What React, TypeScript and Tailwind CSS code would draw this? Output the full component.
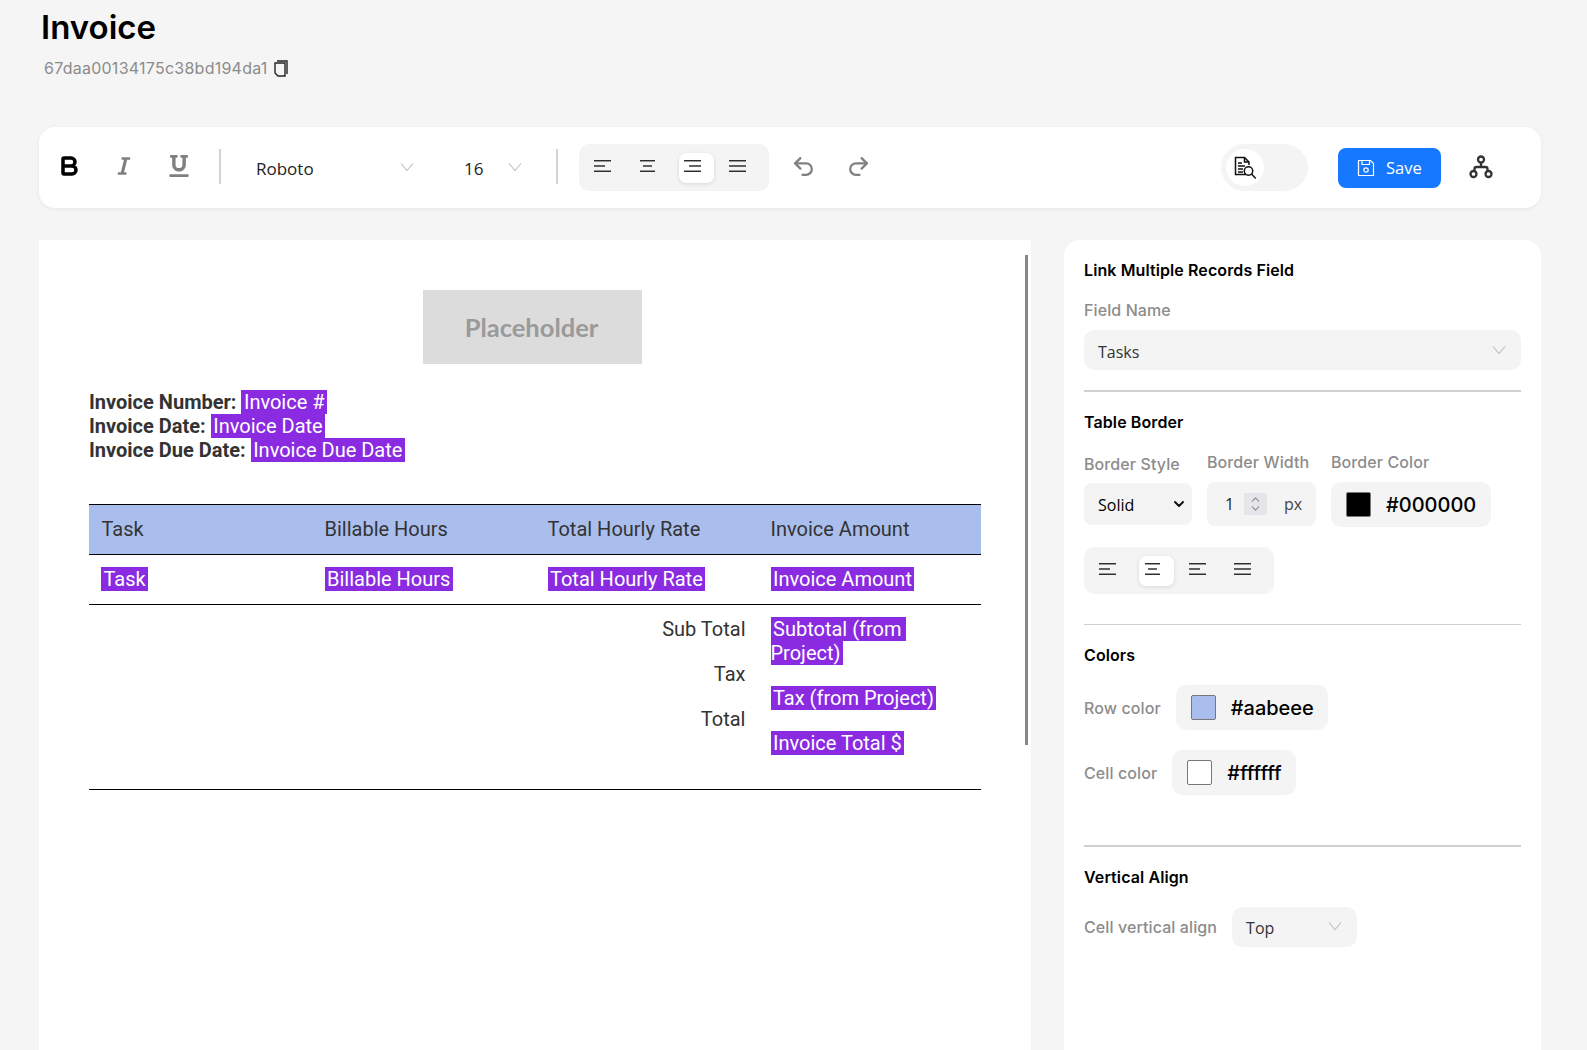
import { ChevronDown, ChevronUp, Undo2, Redo2, Bold } from 'lucide-react'
import { FaItalic, FaUnderline } from 'react-icons/fa'
import type { ReactNode } from 'react'

const inter = 'font-["Inter",sans-serif]'
const sans = 'font-["Open_Sans",sans-serif]'

function AlignIcon({ kind }: { kind: 'left' | 'center' | 'right' | 'justify' }) {
  const mid = {
    left: 'M0 6h11',
    center: 'M4 6h9',
    right: 'M5 6h12',
    justify: 'M0 6h17',
  }[kind]
  const top = kind === 'center' ? 'M1 .75h15' : 'M0 .75h17'
  const bottom = kind === 'center' ? 'M1 11.25h15' : 'M0 11.25h17'
  return (
    <svg width="17" height="12" viewBox="0 0 17 12" fill="none" stroke="#222" strokeWidth="1.4">
      <path d={top} />
      <path d={mid} />
      <path d={bottom} />
    </svg>
  )
}

function AlignGroup({ kinds, active }: { kinds: ('left' | 'center' | 'right' | 'justify')[]; active: number }) {
  return (
    <div className="flex h-[47px] w-[190px] items-center gap-[10px] rounded-[10px] bg-[#f4f4f4] px-[10px]">
      {kinds.map((kind, i) => (
        <div
          key={i}
          className={`flex h-[30px] w-[35px] items-center rounded-[7px] pb-[4px] pl-[5px] ${
            i === active ? 'bg-white shadow-[0_1px_4px_rgba(0,0,0,0.12)]' : ''
          }`}
        >
          <AlignIcon kind={kind} />
        </div>
      ))}
    </div>
  )
}

function Thin({ className = '' }: { className?: string }) {
  return (
    <svg width="14" height="8" viewBox="0 0 14 8" fill="none" stroke="#bdbdbd" strokeWidth="1.1" className={className}>
      <path d="M1 .5l6 7 6-7" />
    </svg>
  )
}

function Pill({ children }: { children: ReactNode }) {
  return <span className="bg-[#8a2be2] px-[2.5px] text-white [box-decoration-break:slice]">{children}</span>
}

function Heading({ children }: { children: ReactNode }) {
  return <div className={`${inter} text-base leading-5 font-semibold tracking-[0.1px] text-black`}>{children}</div>
}

function Label({ children, className = '' }: { children: ReactNode; className?: string }) {
  return (
    <div className={`${inter} text-base leading-5 font-medium tracking-[0.1px] whitespace-nowrap text-[#8c8c8c] ${className}`}>
      {children}
    </div>
  )
}

function ColorBox({ color, value, className = '' }: { color: string; value: string; className?: string }) {
  return (
    <div className={`flex h-[45px] items-center gap-[15px] rounded-[10px] bg-[#f4f4f4] pl-[15px] ${className}`}>
      <span className="h-[25px] w-[25px] rounded-[2px] border border-[#777]" style={{ backgroundColor: color }} />
      <span className={`${inter} text-xl font-medium text-black`}>{value}</span>
    </div>
  )
}

function DocSearchIcon() {
  return (
    <svg width="24" height="24" viewBox="0 0 24 24" fill="none" stroke="#111" strokeWidth="1.5">
      <path d="M13 18.5H2.5V1.5h9l4.5 4.5v3" />
      <path d="M11.5 1.5V6H16" />
      <path d="M5 7h4M5 10h7M5 13h5M5 16h5" />
      <circle cx="15.5" cy="15" r="4.2" />
      <path d="M18.5 18l4.3 4.5" />
    </svg>
  )
}

function SaveIcon() {
  return (
    <svg width="18" height="18" viewBox="0 0 18 18" fill="none" stroke="white" strokeWidth="1.2">
      <path d="M1.5 1.5h12l3 3v12h-15z" />
      <path d="M5 1.5v4h7.5v-4" />
      <circle cx="9" cy="11" r="2.2" />
    </svg>
  )
}

function NetworkIcon() {
  return (
    <svg width="24" height="24" viewBox="0 0 24 24" fill="none" stroke="#333" strokeWidth="2.3">
      <circle cx="12" cy="4.5" r="3" />
      <circle cx="4.5" cy="19" r="3" />
      <circle cx="19.5" cy="19" r="3" />
      <path d="M12 7.5v4.5M5.5 16v-2a2 2 0 012-2h9a2 2 0 012 2v2" />
    </svg>
  )
}

function CopyIcon() {
  return (
    <svg width="14" height="17" viewBox="0 0 14 17" fill="none" stroke="#222" strokeWidth="1.4">
      <path d="M3 1h10v13" />
      <path d="M1 3h10v13H4l-3-3z" />
    </svg>
  )
}

function Toolbar() {
  return (
    <div className="flex h-[81px] items-center rounded-2xl bg-white pl-[18px] shadow-[0_1px_4px_rgba(0,0,0,0.06)]">
      <Bold size={24} strokeWidth={3.5} className="-mt-[4px] text-black" />
      <FaItalic size={20} className="-mt-[3px] ml-[33px] text-[#808080]" />
      <FaUnderline size={22} className="-mt-[3px] ml-[34px] text-[#808080]" />
      <div className="-mt-[2px] ml-[29px] h-[35px] w-[2px] bg-[#d4d4d4]" />
      <span className={`${sans} ml-[35px] w-[144px] pt-[3px] text-[17px] text-[#222]`}>Roboto</span>
      <Thin className="-mt-[2px]" />
      <span className={`${sans} ml-[50px] w-[44px] pt-[3px] text-[17px] text-[#222]`}>16</span>
      <Thin className="-mt-[2px]" />
      <div className="-mt-[2px] ml-[34px] h-[35px] w-[2px] bg-[#d4d4d4]" />
      <div className="ml-[21px]">
        <AlignGroup kinds={['left', 'center', 'right', 'justify']} active={2} />
      </div>
      <Undo2 size={25} strokeWidth={2.2} className="-mt-[2px] ml-[22px] text-[#808080]" />
      <Redo2 size={25} strokeWidth={2.2} className="-mt-[2px] ml-[30px] text-[#808080]" />
      <div className="ml-[350px] flex h-[47px] w-[87px] items-center rounded-full bg-[#f4f4f4] pl-[5px]">
        <div className="flex h-[37px] w-[38px] items-center justify-center rounded-full bg-white">
          <DocSearchIcon />
        </div>
      </div>
      <div className="ml-[30px] flex h-10 w-[103px] items-center gap-[11px] rounded-lg bg-[#1677ff] pl-[19px]">
        <SaveIcon />
        <span className={`${sans} pt-[1px] text-[16.5px] text-white`}>Save</span>
      </div>
      <div className="-mt-[2px] ml-[28px]">
        <NetworkIcon />
      </div>
    </div>
  )
}

function InvoiceTable() {
  const columns = ['Task', 'Billable Hours', 'Total Hourly Rate', 'Invoice Amount']
  return (
    <table className="mt-[42px] w-full table-fixed border-collapse border-y border-black">
      <thead>
        <tr className="border-b border-black bg-[#aabeee]">
          {columns.map((name) => (
            <th key={name} className="px-[12.5px] pt-[12px] pb-[13px] text-left font-normal">
              {name}
            </th>
          ))}
        </tr>
      </thead>
      <tbody>
        <tr className="border-b border-black">
          {columns.map((name, i) => (
            <td key={name} className={`pt-[12px] pr-[12.5px] pb-[13px] ${i === 0 ? 'pl-3' : 'pl-[12.5px]'}`}>
              <Pill>{name}</Pill>
            </td>
          ))}
        </tr>
        <tr>
          <td className="px-3 py-[12.5px]" />
          <td className="px-3 py-[12.5px]" />
          <td className="px-[12.5px] pt-[12px] pb-[13px] align-top text-right">
            <p className="mb-[21px]">Sub Total</p>
            <p className="mb-[21px]">Tax</p>
            <p className="mb-[21px]">Total</p>
          </td>
          <td className="px-[12.5px] pt-[12px] pb-[13px] align-top">
            <p className="mb-[21px]">
              <Pill>{'Subtotal (from\u00a0 Project)'}</Pill>
            </p>
            <p className="mb-[21px]">
              <Pill>Tax (from Project)</Pill>
            </p>
            <p className="mb-[21px]">
              <Pill>Invoice Total $</Pill>
            </p>
          </td>
        </tr>
      </tbody>
    </table>
  )
}

function Canvas() {
  return (
    <div className='relative h-[900px] w-[992px] shrink-0 bg-white px-[50px] pt-[50px] font-["Roboto",sans-serif] text-xl leading-6 text-[#333]'>
      <div className="absolute top-[15px] right-[3px] h-[490px] w-[3px] bg-[#888]" />
      <div className='ml-[334px] flex h-[74px] w-[219px] items-center justify-center bg-[#dcdcdc] pr-[2px] pb-[1px] font-["Lato",sans-serif] text-[25.5px] font-bold text-[#9a9a9a]'>
        Placeholder
      </div>
      <div className="mt-[26px] font-bold">
        <div>
          Invoice Number: <span className="font-normal"><Pill>Invoice #</Pill></span>
        </div>
        <div>
          Invoice Date: <span className="font-normal"><Pill>Invoice Date</Pill></span>
        </div>
        <div>
          Invoice Due Date: <span className="font-normal"><Pill>Invoice Due Date</Pill></span>
        </div>
      </div>
      <InvoiceTable />
    </div>
  )
}

function SidePanel() {
  return (
    <div className="h-[900px] flex-1 rounded-t-2xl bg-white px-5 pt-5">
      <Heading>Link Multiple Records Field</Heading>
      <Label className="mt-[20px]">Field Name</Label>
      <div className="mt-[10px] flex h-10 items-center justify-between rounded-[10px] bg-[#f4f4f4] pr-[15px] pl-[14px]">
        <span className={`${sans} pt-[3px] text-base text-[#333]`}>Tasks</span>
        <Thin />
      </div>
      <div className="mt-[20px] h-[2px] bg-[#cfcfcf]" />

      <div className="mt-[20px]">
        <Heading>Table Border</Heading>
      </div>
      <div className="mt-[20px] flex">
        <div className="w-[123px]">
          <Label className="mt-[2px]">Border Style</Label>
          <div className="mt-[9px] flex h-[42px] w-[108px] items-center justify-between rounded-[8px] bg-[#f4f4f4] pr-[5px] pl-[14px]">
            <span className={`${sans} pt-[1px] text-base text-black`}>Solid</span>
            <ChevronDown size={16} strokeWidth={3} className="text-[#111]" />
          </div>
        </div>
        <div className="w-[124px]">
          <Label>Border Width</Label>
          <div className="mt-[10px] flex h-[44px] w-[109px] items-center rounded-[8px] bg-[#f4f4f4] pl-[18px]">
            <span className={`${sans} w-[19px] text-base text-[#222]`}>1</span>
            <div className="flex h-[22px] w-[23px] flex-col items-center justify-center bg-[#e6e6ea]">
              <ChevronUp size={13} strokeWidth={2} className="-mb-[2px] text-[#8e8e8e]" />
              <ChevronDown size={13} strokeWidth={2} className="-mt-[2px] text-[#8e8e8e]" />
            </div>
            <span className={`${sans} ml-[17px] text-base text-[#444]`}>px</span>
          </div>
        </div>
        <div>
          <Label>Border Color</Label>
          <ColorBox color="#000000" value="#000000" className="mt-[10px] w-[160px]" />
        </div>
      </div>
      <div className="mt-[20px]">
        <AlignGroup kinds={['left', 'center', 'left', 'justify']} active={1} />
      </div>
      <div className="mt-[30px] h-px bg-[#cfcfcf]" />

      <div className="mt-[20px]">
        <Heading>Colors</Heading>
      </div>
      <div className="mt-[20px] flex items-center gap-[15px]">
        <Label>Row color</Label>
        <ColorBox color="#aabeee" value="#aabeee" className="w-[152px]" />
      </div>
      <div className="mt-[20px] flex items-center gap-[15px]">
        <Label>Cell color</Label>
        <ColorBox color="#ffffff" value="#ffffff" className="w-[124px]" />
      </div>
      <div className="mt-[50px] h-[2px] bg-[#cfcfcf]" />

      <div className="mt-[20px]">
        <Heading>Vertical Align</Heading>
      </div>
      <div className="mt-[20px] flex items-center gap-[15px]">
        <Label>Cell vertical align</Label>
        <div className="flex h-10 w-[125px] items-center justify-between rounded-[10px] bg-[#f4f4f4] pr-[15px] pl-[14px]">
          <span className={`${sans} pt-[1px] text-base text-[#333]`}>Top</span>
          <Thin className="-mt-[2px]" />
        </div>
      </div>
    </div>
  )
}

export default function App() {
  return (
    <div className="h-[1050px] overflow-hidden bg-[#f5f5f5] pr-[46px] pl-[39px]">
      <div className="pt-[7px] pl-[2px]">
        <h1 className={`${inter} text-[33px] leading-10 font-semibold text-black`}>Invoice</h1>
        <div className={`${inter} mt-[9px] flex items-center gap-[6px] pl-[3px] text-base leading-6 tracking-[0.25px] text-[#8c8c8c]`}>
          67daa00134175c38bd194da1
          <CopyIcon />
        </div>
      </div>
      <div className="mt-[47px]">
        <Toolbar />
      </div>
      <div className="mt-[32px] flex gap-[33px]">
        <Canvas />
        <SidePanel />
      </div>
    </div>
  )
}
